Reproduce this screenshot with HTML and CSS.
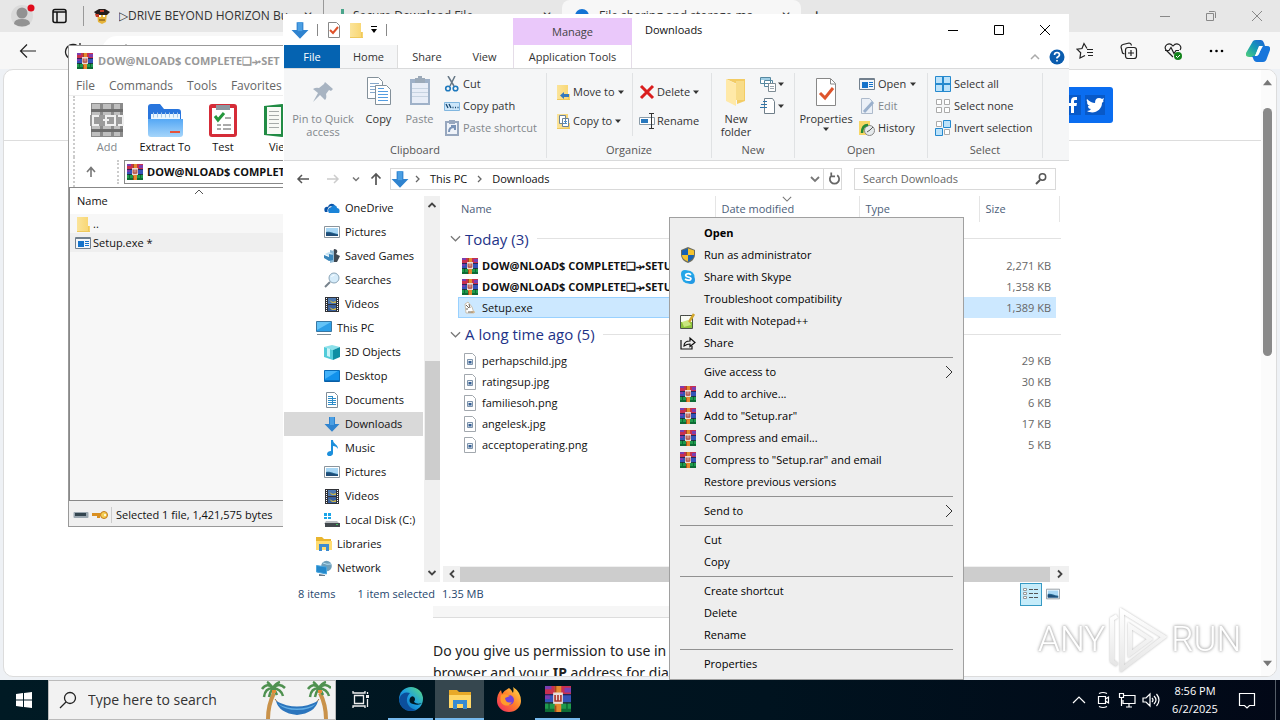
FILE: index.html
```html
<!DOCTYPE html>
<html lang="en">
<head>
<meta charset="utf-8">
<title>Downloads</title>
<link rel="stylesheet" href="styles.css">
</head>
<body>
<svg class="defs" aria-hidden="true">
  <defs>
    <linearGradient id="gEdge" x1="0" y1="1" x2="1" y2="0"><stop offset="0" stop-color="#0c59a4"/><stop offset=".5" stop-color="#1b9de2"/><stop offset="1" stop-color="#5fe07a"/></linearGradient>
    <linearGradient id="gFox" x1="1" y1="0" x2="0" y2="1"><stop offset="0" stop-color="#ffe14a"/><stop offset=".5" stop-color="#ff7a2a"/><stop offset="1" stop-color="#ee2268"/></linearGradient>
    <linearGradient id="gCop" x1="0" y1="1" x2="1" y2="0"><stop offset="0" stop-color="#53d17a"/><stop offset=".5" stop-color="#159ab5"/><stop offset="1" stop-color="#1d5fd8"/></linearGradient>
    <linearGradient id="gFolder" x1="0" y1="0" x2="1" y2="0"><stop offset="0" stop-color="#fbe49a"/><stop offset="1" stop-color="#f8d56f"/></linearGradient>
    <linearGradient id="gExt" x1="0" y1="0" x2="0" y2="1"><stop offset="0" stop-color="#55a8f5"/><stop offset="1" stop-color="#a5d5fa"/></linearGradient>
    <linearGradient id="gMark" x1="0" y1="0" x2="0" y2="1"><stop offset="0" stop-color="#fff"/><stop offset="1" stop-color="#e6e6e6"/></linearGradient>
  </defs>
  <symbol id="rar" viewBox="0 0 16 16"><path fill="#c8304f" d="M0 0h16v5H0z"/><path fill="#7b3fb0" d="M0 0h4v2H0zM12 1h4v3h-4z"/><path fill="#3453b8" d="M0 5h16v5H0z"/><path fill="#7a3bb0" d="M0 5h3v3H0z"/><path fill="#1f9a4c" d="M0 10h16v6H0z"/><path fill="#0d6b35" d="M0 14h16v2H0zM2 10h1v6H2zM13 10h1v6h-1z"/><path fill="#231b3c" d="M0 5h16v.7H0zM0 10h16v.7H0z"/><path fill="#e58a2e" d="M6 0h4v16H6z"/><path fill="#a64a1c" d="M6 0h1v4H6zM6 12h1v4H6z"/><path fill="#e9dcd8" d="M5 4h6v7H5z"/><path fill="none" stroke="#a9322b" d="M6.200 5.500v3.700h3.600V5.500M8 5.500v3.500"/></symbol>
  <symbol id="down" viewBox="0 0 16 16"><path fill="#2f83cf" d="M5 1h6v7h4.500L8 15.800.5 8H5z"/><path fill="#4b9fe3" d="M6 1h4v8H6z"/></symbol>
  <symbol id="sheet" viewBox="0 0 16 16"><path fill="#fff" stroke="#a2a8ae" d="M2.500.5h8l3 3v12h-11z"/><path fill="#e8eef4" stroke="#7c93ab" d="M5.500 6.500h5v5h-5z"/><path fill="#345f95" d="M6.500 8h3v2.500h-3z"/></symbol>
  <symbol id="folder" viewBox="0 0 16 16"><path fill="url(#gFolder)" d="M2 1h11v9h2v5H2z"/><path fill="#efc95d" d="M2 15h13v1H2zM13 10h1v5h-1z"/></symbol>
  <symbol id="pics" viewBox="0 0 16 16"><path fill="#fff" stroke="#8a949c" d="M.5 2.500h15v11H.5z"/><path fill="#a9d7f5" d="M2 4h12v8H2z"/><path fill="#2a6c96" d="M2 8c4-1 6 1 12 2v2H2z"/><path fill="#1f4d78" d="M2 9c4-1 7 1 12 2v1H2z"/></symbol>
  <symbol id="video" viewBox="0 0 16 16"><path fill="#303237" d="M1 1h14v15H1z"/><path fill="#4d78b0" d="M4 2h8v6H4z"/><path fill="#385f9c" d="M4 9h8v6H4z"/><path fill="#c9b44b" d="M5 4l3 3h4V5L9 6zM5 11l3 3h4v-2l-3 1z"/><path stroke="#fff" stroke-dasharray="1 1" d="M2.500 2v14M13.500 2v14"/></symbol>
  <symbol id="cloud" viewBox="0 0 16 16"><path fill="#0a54a8" d="M1 12C-1 8 2 6 4 7c1-4 6-4 7-1L6 12z"/><path fill="#1b84d8" d="M5 13c-2-3 0-5 2-5 1-4 6-3 6 0 3 0 3 4 2 5z"/><path fill="#fff" d="M4.600 12C3 9 6 7 7 7.600l.8-1.500C5 6 3 9 3.600 12z"/></symbol>
  <symbol id="games" viewBox="0 0 16 16"><path fill="#3f4750" d="M10 1c4 0 4 3 2 5l4 2-3 6H9V5z"/><path fill="#8fb9d4" d="M6 2l4 1v11l-4 1z"/><path fill="#c4e2f3" d="M1 6l4-2 4 2-4 2z"/><path fill="#3a86bb" d="M0 7l5 2V6l4 1v5l-4 1-5-3z"/></symbol>
  <symbol id="lens" viewBox="0 0 16 16"><path stroke="#77828c" stroke-width="2" d="M1 15l5-5"/><circle cx="10" cy="6" r="5" fill="#d6ecfa" stroke="#8aa5b8"/><path fill="none" stroke="#fff" d="M7.500 5q1-2 3-2"/></symbol>
  <symbol id="pc" viewBox="0 0 16 16"><path fill="#2c9fe8" stroke="#3877a3" d="M.5 1.500h15v10H.5z"/><path fill="#63c3f7" d="M1 2h14L1 10z"/><path fill="#7d8d98" d="M1 14h14v1H1z"/></symbol>
  <symbol id="cube" viewBox="0 0 16 16"><path fill="#8ce0ea" d="M0 3l8-2 8 2-7 3z"/><path fill="#52cbd9" d="M0 3l9 3v10l-9-3z"/><path fill="#0e8ea3" d="M16 3L9 6v10l7-3z"/><path fill="#c9f3f7" d="M3 4l3 1v8l-3-1z"/></symbol>
  <symbol id="desk" viewBox="0 0 16 16"><path fill="#1191ec" stroke="#0a6cb8" d="M.5 2.500h15v11H.5z"/><path fill="#43b2fa" d="M1 3h13L1 11z"/><path stroke="#064f8f" d="M1 13h14"/></symbol>
  <symbol id="docs" viewBox="0 0 16 16"><path fill="#fff" stroke="#7f8d98" d="M2.500.5h8l3 3v12h-11z"/><path stroke="#2c8cc9" d="M4 4.500h5M4 6.500h8M4 8.500h8M4 10.500h8M4 12.500h8M8.500 5v8"/></symbol>
  <symbol id="music" viewBox="0 0 16 16"><path fill="#1c8fdc" d="M7 0h2c0 4 5 4 5 9-1-2-3-3-5-3v7c0 4-6 4-6 1 0-2 2-3 4-3z"/></symbol>
  <symbol id="disk" viewBox="0 0 16 16"><path fill="#1aa5e8" d="M0 1h3v3H0zM4 1h3v3H4zM0 5h3v2H0zM4 5h3v2H4z"/><path fill="#b9bdc1" d="M2 9h11l3 3H0z"/><path fill="#42484d" d="M1 11h15v4H1z"/><path fill="#40c05a" d="M12 12h2v1h-2z"/></symbol>
  <symbol id="libs" viewBox="0 0 16 16"><path fill="#e9b52f" d="M0 1h6l2 2h7v11H0z"/><path fill="#ffdc71" d="M0 5h16v9H0z"/><path fill="#3c8bd0" d="M3 8h10v7h-3v-4H6v4H3z"/></symbol>
  <symbol id="net" viewBox="0 0 16 16"><circle cx="10.500" cy="6" r="5.300" fill="#6f9fba"/><path fill="none" stroke="#b4def3" d="M7 3q4 2 8 1"/><path fill="#2488cb" stroke="#4aa6de" d="M.5 5.500l10 1.500v7l-10-2z"/><path fill="#65798a" d="M3 14l6 1v1H3z"/></symbol>
  <symbol id="cat" viewBox="0 0 16 16"><path fill="#fff" stroke="#c9bfae" d="M3 4l3-2 4 5 2 6H4z"/><path stroke="#6d665d" d="M4 5l3 3M7 4l1 4M4 9h2M6 12h5"/><path fill="#d69a4e" d="M9 11h4v2H9z" opacity=".35"/></symbol>
  <symbol id="caret" viewBox="0 0 8 8"><path fill="currentColor" d="M1 2.500h6L4 6z"/></symbol>
  <symbol id="exe" viewBox="0 0 16 16"><path fill="#f4f7fa" stroke="#72808e" d="M.5 2.500h15v11H.5z"/><path fill="#72808e" d="M1 3h14v1H1z"/><path fill="#1673ca" d="M3 6h6v6H3z"/><path stroke="#1673ca" d="M10 6.500h4M10 8.500h4M10 10.500h4"/></symbol>
  <symbol id="chev" viewBox="0 0 12 12"><path fill="none" stroke="currentColor" stroke-width="1.300" d="M1 3.500l5 5 5-5"/></symbol>
</svg>

<div class="desktop">
  <section class="browser" aria-label="Browser">
    <div class="tabstrip">
      <svg class="avatar" viewBox="0 0 24 24"><circle cx="11" cy="12" r="11" fill="#dadada"/><circle cx="11" cy="9" r="5.500" fill="#929292"/><path fill="#929292" d="M3 20q0-5 8-5t8 5q-8 5-16 0z"/><circle cx="20" cy="4" r="3.500" fill="#e00b1c"/></svg>
      <svg class="spaces" viewBox="0 0 16 16"><rect x="1" y="1.500" width="13" height="13" rx="2" fill="none" stroke="#111" stroke-width="1.500"/><path stroke="#111" stroke-width="1.500" d="M1 4h13M5 4v10"/></svg>
      <i class="tabsep"></i>
      <div class="tab"><svg class="i16" viewBox="0 0 16 16"><path fill="#e6b43a" d="M3 5h10l-1 9-4 2-4-2z"/><path fill="#251d1c" d="M0 4l5-3h6l5 3-3 3H3z"/><path fill="#c43b25" d="M1 6h4v3H2zM6 2h4v2H6z"/><path fill="#fff" d="M5 7h2v2H5zM9 7h2v2H9z"/><path stroke="#684315" d="M5 12h6"/></svg><span>▷DRIVE BEYOND HORIZON Bu</span><b>✕</b></div>
      <div class="tab second"><i class="green"></i><span>Secure Download File</span><b>✕</b></div>
      <div class="tab active"><svg class="i16" viewBox="0 0 16 16"><circle cx="8" cy="8" r="7" fill="#1473d4"/></svg><span>File sharing and storage ma</span><b>✕</b></div>
      <button class="plus" aria-label="New tab">+</button>
      <div class="caption">
        <svg viewBox="0 0 12 12"><path stroke="#888" d="M1 6.500h10"/></svg>
        <svg viewBox="0 0 12 12"><path fill="none" stroke="#888" d="M1.500 3.500h7v7h-7zM4 1.500h5.500q1 0 1 1V8"/></svg>
        <svg viewBox="0 0 12 12"><path stroke="#888" d="M1 1l10 10M11 1L1 11"/></svg>
      </div>
    </div>
    <div class="bar">
      <svg class="back" viewBox="0 0 18 16"><path fill="none" stroke="#222" stroke-width="1.200" d="M17 8H1.500M8 1.500L1.500 8 8 14.500"/></svg>
      <svg class="reload" viewBox="0 0 18 18"><path fill="none" stroke="#222" stroke-width="1.300" d="M15.500 6A7.500 7.500 0 1 0 16.500 9M16 1v5h-5"/></svg>
      <div class="urlbox"><svg class="i16" viewBox="0 0 16 16"><path fill="none" stroke="#555" d="M5 7V5a3 3 0 0 1 6 0v2M4 7h8v6H4z"/></svg></div>
      <div class="baricons">
        <svg viewBox="0 0 18 18"><path fill="none" stroke="#222" stroke-width="1.200" d="M11 6.500L8 1.500 6 6.500l-5 .7 3.700 3.500L4 16l5-2.500M11 7.500h6M11 10.500h6M12 13.500h5"/></svg>
        <svg viewBox="0 0 18 18"><path fill="none" stroke="#222" stroke-width="1.200" d="M4.500 12L2.500 11 1 5q0-2 2-2.500L9 1q2 0 2.500 2.500"/><rect x="5.500" y="5.500" width="11" height="11" rx="2.500" fill="none" stroke="#222" stroke-width="1.200"/><path stroke="#222" stroke-width="1.200" d="M11 8v6M8 11h6"/></svg>
        <svg viewBox="0 0 18 18"><path fill="none" stroke="#222" stroke-width="1.200" d="M9 15L2 8C-1 4 5-1 9 4c4-5 10 0 7 4M1 8.500h4l2-3 3 6 2-3h3"/><circle cx="14" cy="14" r="4" fill="#14831c"/><path stroke="#fff" fill="none" d="M12 14l1.500 1.500L16 13"/></svg>
        <svg viewBox="0 0 18 18"><circle cx="3" cy="9" r="1.300"/><circle cx="8.500" cy="9" r="1.300"/><circle cx="14" cy="9" r="1.300"/></svg>
      </div>
      <svg class="copilot" viewBox="0 0 24 24"><path fill="url(#gCop)" d="M7 2q1-1 3-1h5q2 0 3 3l1 3h-4q-2 0-3 3l-2 5q-1 3-3 3H3q-4 0-3-4z"/><path fill="#1876db" d="M17 7h4q4 0 3 4l-3 8q-1 4-4 4h-6q-3 0-4-4l-1-2h4q2 0 3-3z"/><path fill="#fff" d="M13 7h3l-3 8q-1 2-3 2H9z"/></svg>
    </div>
    <div class="page">
      <header class="sitehead"><div class="social"><svg viewBox="0 0 18 18"><path fill="#fff" d="M9 17v-7H6V7h3V5q0-4 4-4h2v3h-2q-1 0-1 1v2h3l-.5 3H12v7z"/></svg><svg viewBox="0 0 18 18"><path fill="#fff" d="M1 3q4 4 8 4 0-5 4-5 2 0 3 1l2-1-1 3 1-.3L16 7C16 14 8 19 1 15q3 0 4-2-3 0-3-3h2Q1 9 1 6l1 .6Q0 5 1 3z"/></svg></div></header>
      <div class="consent"><div class="strip"></div><p>Do you give us permission to use in<br>browser and your <b>IP</b> address for dia</p></div>
      <div class="pscroll"><svg viewBox="0 0 10 10"><path fill="#777" d="M0 8l5-6 5 6z"/></svg><i></i><svg viewBox="0 0 10 10"><path fill="#777" d="M0 2l5 6 5-6z"/></svg></div>
    </div>
  </section>

  <section class="win rarwin" aria-label="WinRAR">
    <div class="rtitle"><svg class="i16"><use href="#rar"/></svg><b>DOW@NLOAD$ COMPLETE❏⤞SET</b></div>
    <nav class="rmenu"><button>File</button><button>Commands</button><button>Tools</button><button>Favorites</button></nav>
    <div class="rtools">
      <button class="off"><svg viewBox="0 0 36 36"><path fill="#777" d="M2 1h32v34H2z"/><path fill="#b5b5b5" d="M3 2h8v32H3zM14 2h8v32h-8zM25 2h6v32h-6z"/><path fill="#555" d="M2 7h32v3H2zM2 27h32v3H2z"/><path fill="#8a8a8a" d="M1 13h34v11H1z"/><path fill="none" stroke="#eee" stroke-width="2" d="M10 14H4v9h6M17 14h9v9h-9zM14 18h6M29 14h5v9h-5"/></svg>Add</button>
      <button><svg viewBox="0 0 36 36"><path fill="#2875dd" d="M1 5q0-3 3-3h9l4 5h14q3 0 3 3v18H1z"/><path fill="#eaf6ff" d="M4 12h29v12H4z"/><path stroke="#a7c8e7" stroke-dasharray="1 3" stroke-width="5" d="M6 13h26"/><path fill="url(#gExt)" d="M1 17h35v15q0 3-3 3H4q-3 0-3-3z"/><path fill="#e6533a" d="M23 29h10v2H23z"/></svg>Extract To</button>
      <button><svg viewBox="0 0 36 36"><rect x="4" y="2" width="28" height="33" rx="3" fill="#d52c38"/><path fill="#fff" d="M7 6h22v26H7z"/><path fill="#8c979f" d="M11 3h14v5H11z"/><path fill="none" stroke="#24973c" stroke-width="3" d="M10 14l3 4 6-7"/><path stroke="#555" d="M20 16h6M12 23h4M18 23h8M12 27h4M18 27h8"/></svg>Test</button>
      <button><svg viewBox="0 0 36 36"><path fill="#218b44" d="M1 4l18-2 16 3v28l-16 2-18-2z"/><path fill="#f8f9f5" d="M4 5h14v27H4zM20 5h13v27H20z"/><path stroke="#a6aaa8" d="M6 9.500h10M6 13.500h10M6 17.500h10M6 21.500h10M6 25.500h10M22 9.500h9M22 13.500h9"/></svg>View</button>
    </div>
    <div class="raddr"><div class="rup"><svg viewBox="0 0 12 12"><path fill="none" stroke="#777" stroke-width="1.600" d="M6 11V2M2 6l4-4.500L10 6"/></svg></div><div class="rpath"><svg class="i16"><use href="#rar"/></svg><b>DOW@NLOAD$ COMPLET</b></div></div>
    <div class="rlist">
      <div class="rhead">Name<svg class="sort" viewBox="0 0 12 12"><path fill="none" stroke="#555" d="M2 8l4-4 4 4"/></svg></div>
      <div class="rrow"><svg class="i16"><use href="#folder"/></svg>..</div>
      <div class="rrow alt"><svg class="i16"><use href="#exe"/></svg>Setup.exe *</div>
    </div>
    <div class="rstatus"><svg viewBox="0 0 16 16"><rect x=".5" y="5" width="15" height="6" rx="1" fill="#9ba7b0"/><path fill="#34454f" d="M2 6h11v3H2z"/></svg><svg viewBox="0 0 16 16"><circle cx="12" cy="8" r="3.500" fill="#f5cd53" stroke="#c1781d"/><path fill="#d98f21" d="M0 6h9v3H8v2H5V9H0z"/><circle cx="13" cy="8" r="1" fill="#fff"/></svg><span>Selected 1 file, 1,421,575 bytes</span></div>
  </section>

  <section class="win explorer" aria-label="Downloads">
    <div class="etop">
      <div class="quick"><svg class="i18"><use href="#down"/></svg><i></i><svg class="i16" viewBox="0 0 16 16"><path fill="#fff" stroke="#888" d="M2.500.5h8l3 3v12h-11z"/><path fill="none" stroke="#df5129" stroke-width="2" d="M4 8l3 3 5-6"/></svg><svg class="i16"><use href="#folder"/></svg><svg class="qcaret" viewBox="0 0 8 8"><path d="M1 0h6v1H1zM1 3h6L4 7z"/></svg><i></i></div>
      <div class="manage">Manage</div><h1>Downloads</h1>
      <div class="ecap"><button aria-label="Minimize"><svg viewBox="0 0 12 12"><path stroke="#000" d="M1 6.500h10"/></svg></button><button aria-label="Maximize"><svg viewBox="0 0 12 12"><path fill="none" stroke="#000" d="M1.500 1.500h9v9h-9z"/></svg></button><button aria-label="Close"><svg viewBox="0 0 12 12"><path stroke="#000" d="M1 1l10 10M11 1L1 11"/></svg></button></div>
    </div>
    <nav class="etabs"><button class="file">File</button><button class="home">Home</button><button class="t">Share</button><button class="t v">View</button><button class="apptools">Application Tools</button><span class="help"><svg class="up" viewBox="0 0 10 10"><path fill="none" stroke="#aaa" stroke-width="1.500" d="M1 7l4-4 4 4"/></svg><svg class="i16" viewBox="0 0 16 16"><circle cx="8" cy="8" r="7.500" fill="#0a5cae"/><path fill="none" stroke="#fff" stroke-width="1.600" d="M5.500 6q0-2.500 2.500-2.500T10.500 6Q10 7.500 8 8.500v1M8 11v1.600"/></svg></span></nav>
    <div class="ribbon">
      <div class="grp clip"><div class="cols">
        <button class="big off pin"><svg viewBox="0 0 32 32"><path fill="#9ba9b9" d="M18 6l8 7-2 2-2-1-3 4q1 4-1 6l-5-5-7 7 5-9-5-4q3-2 6-1l5-4z"/></svg>Pin to Quick<br>access</button>
        <button class="big"><svg viewBox="0 0 32 32"><path fill="#fff" stroke="#83909a" d="M4.500 1.500h11l4 4v17h-15z"/><path stroke="#86a8cb" d="M7 7.500h9M7 10.500h9M7 13.500h9M7 16.500h9"/><path fill="#fff" stroke="#83909a" d="M12.500 9.500h11l4 4v15h-15z"/><path stroke="#559de0" d="M15 15.500h10M15 18.500h10M15 21.500h10M15 24.500h10M15 12.500h6"/></svg>Copy</button>
        <button class="big off"><svg viewBox="0 0 32 32"><path fill="#91a5c0" d="M6 3h20v26H6z"/><path fill="#e6ecf7" d="M8 7h16v20H8z"/><path fill="#8d9daf" d="M11 2h3V0h4v2h3v5H11z"/><path stroke="#c0cede" d="M8 12.500h16M8 16.500h16M8 20.500h16"/></svg>Paste</button>
        <div class="small"><button><svg viewBox="0 0 16 16"><path stroke="#667786" stroke-width="1.500" d="M4 0l6 10M11 0L6 10"/><circle cx="4" cy="12.500" r="2.300" fill="none" stroke="#1e79bd" stroke-width="1.600"/><circle cx="11.500" cy="12.500" r="2.300" fill="none" stroke="#1e79bd" stroke-width="1.600"/></svg>Cut</button><button><svg viewBox="0 0 16 16"><path fill="#cce6fa" stroke="#80b6df" d="M.5 4.500h15v8H.5z"/><path fill="none" stroke="#15456d" stroke-width="1.300" d="M2 6l2 4M5 6l2 4M8.500 9.500h1M11 9.500h1M13.500 9.500h1"/></svg>Copy path</button><button class="off"><svg viewBox="0 0 16 16"><path fill="#eff3fa" stroke="#879ab5" stroke-width="2" d="M2 2h12v13H2z"/><path fill="#879ab5" d="M5 0h6v4H5z"/><path fill="none" stroke="#6482ac" stroke-width="2" d="M5 12q0-5 5-5M7 6h4v4"/></svg>Paste shortcut</button></div>
      </div><h2>Clipboard</h2></div>
      <div class="grp org"><div class="cols">
        <div class="small wide"><button><svg viewBox="0 0 16 16"><use href="#folder"/><path fill="#3478bd" d="M5 11.500l4-3.500v2h5v3H9v2z"/></svg>Move to <svg class="car"><use href="#caret"/></svg></button><button><svg viewBox="0 0 16 16"><use href="#folder"/><path fill="#fff" stroke="#6c8398" d="M4.500 2.500h6v8h-6zM7.500 5.500h6v8h-6z"/><path stroke="#4c91ce" d="M9 8.500h3M9 10.500h3"/></svg>Copy to <svg class="car"><use href="#caret"/></svg></button></div>
        <div class="small wide line"><button><svg viewBox="0 0 16 16"><path stroke="#da1e1e" stroke-width="3" d="M2 2l12 12M14 2L2 14"/></svg>Delete <svg class="car"><use href="#caret"/></svg></button><button><svg viewBox="0 0 16 16"><path fill="#fff" stroke="#8a9ba8" d="M.5 4.500h15v7H.5z"/><path fill="#2878be" d="M2 6h7v4H2z"/><path fill="none" stroke="#333" d="M10 .5h5M12.500 1v14M10 15.500h5"/></svg>Rename</button></div>
      </div><h2>Organize</h2></div>
      <div class="grp new"><div class="cols">
        <button class="big"><svg viewBox="0 0 32 32"><path fill="#f3cc64" d="M6 3h19v22l-8 3V8z"/><path fill="#ffe9a8" d="M6 3l10 5v22L6 25z"/><path fill="#f8dc89" d="M16 5h8v19h-8z"/></svg>New<br>folder</button>
        <div class="small tiny"><button aria-label="New item"><svg viewBox="0 0 16 16"><path fill="#fff" stroke="#5688a0" d="M.5 1.500h10v6H.5zM4.500 4.500h8v6h-8z"/><path fill="#9fcee5" d="M1 2h9v2H1z"/><path fill="#fff" stroke="#7d8b94" d="M8.500 7.500h7v8h-7z"/><path stroke="#9aa7b0" d="M10 10.500h4M10 12.500h4"/></svg><svg class="car"><use href="#caret"/></svg></button><button aria-label="Easy access"><svg viewBox="0 0 16 16"><path fill="#fff" stroke="#6f7e89" d="M4.500.5h8l2 3v12h-10z"/><path stroke="#2f75a9" d="M0 9.500h7M1 6.500h6M3 3.500h4"/></svg><svg class="car"><use href="#caret"/></svg></button></div>
      </div><h2>New</h2></div>
      <div class="grp opn"><div class="cols">
        <button class="big"><svg viewBox="0 0 32 32"><path fill="#fff" stroke="#888" d="M6.500 2.500h14l5 5v22h-19z"/><path fill="none" stroke="#888" d="M20.500 3v5h5"/><path fill="none" stroke="#de542c" stroke-width="3" d="M10 17l5 5 8-10"/></svg>Properties<svg class="car"><use href="#caret"/></svg></button>
        <div class="small"><button><svg><use href="#exe"/></svg>Open <svg class="car"><use href="#caret"/></svg></button><button class="off"><svg viewBox="0 0 16 16"><path fill="#eaf0f8" stroke="#a1b0c4" d="M2.500.5h8l3 3v12h-11z"/><path stroke="#8ba4c5" stroke-width="3" d="M5 14l9-10"/></svg>Edit</button><button><svg viewBox="0 0 16 16"><path fill="#f7d766" d="M0 1h11v14H0z"/><circle cx="10.500" cy="10.500" r="5" fill="#e6eaec" stroke="#888"/><path fill="none" stroke="#278b39" stroke-width="2.500" d="M3 13q0-8 6-8"/><path fill="none" stroke="#555" d="M8 12l3-2 3-3"/></svg>History</button></div>
      </div><h2>Open</h2></div>
      <div class="grp sel"><div class="cols">
        <div class="small"><button><svg viewBox="0 0 16 16"><path fill="#bce2fa" stroke="#2589ce" d="M.5.5h15v15H.5z"/><path fill="none" stroke="#2589ce" stroke-width="2" d="M8 0v16M0 8h16"/></svg>Select all</button><button><svg viewBox="0 0 16 16"><path fill="#fff" stroke="#aaa" d="M1.500 1.500h5v5h-5zM9.500 1.500h5v5h-5zM1.500 9.500h5v5h-5zM9.500 9.500h5v5h-5z"/></svg>Select none</button><button><svg viewBox="0 0 16 16"><path fill="#fff" stroke="#aaa" d="M1.500 1.500h5v5h-5zM9.500 9.500h5v5h-5z"/><path fill="#bce2fa" stroke="#2589ce" d="M8.500.5h7v7h-7zM.5 8.500h7v7h-7z"/></svg>Invert selection</button></div>
      </div><h2>Select</h2></div>
    </div>
    <div class="addr">
      <svg class="i16" viewBox="0 0 16 16"><path fill="none" stroke="#555" stroke-width="1.500" d="M14 8H3M7 4L3 8l4 4"/></svg>
      <svg class="i16 fwd" viewBox="0 0 16 16"><path fill="none" stroke="#ccc" stroke-width="1.500" d="M2 8h11M9 4l4 4-4 4"/></svg>
      <svg class="cv" viewBox="0 0 8 8"><path fill="none" stroke="#777" stroke-width="1.500" d="M1 2.500l3 3 3-3"/></svg>
      <svg class="i16" viewBox="0 0 16 16"><path fill="none" stroke="#555" stroke-width="1.700" d="M8 14V3M3.500 7.500L8 3l4.500 4.500"/></svg>
      <div class="crumbs"><svg class="i18"><use href="#down"/></svg><svg class="gt" viewBox="0 0 8 8"><path fill="none" stroke="#666" stroke-width="1.300" d="M2 1l3 3-3 3"/></svg><span>This PC</span><svg class="gt" viewBox="0 0 8 8"><path fill="none" stroke="#666" stroke-width="1.300" d="M2 1l3 3-3 3"/></svg><span>Downloads</span><svg class="dd" viewBox="0 0 10 10"><path fill="none" stroke="#777" stroke-width="1.800" d="M1 3l4 4 4-4"/></svg><svg class="re" viewBox="0 0 12 12"><path fill="none" stroke="#666" stroke-width="1.600" d="M8.500 2.500A4.300 4.300 0 1 1 3.500 2.500M3 0v3.500h3.500"/></svg></div>
      <label class="search"><input type="text" placeholder="Search Downloads" aria-label="Search Downloads"><svg viewBox="0 0 12 12"><circle cx="7.500" cy="4" r="3.200" fill="none" stroke="#555" stroke-width="1.500"/><path stroke="#555" stroke-width="2" d="M5 7L1 11"/></svg></label>
    </div>
    <div class="ebody">
      <ul class="tree">
        <li><svg><use href="#cloud"/></svg>OneDrive</li><li><svg><use href="#pics"/></svg>Pictures</li><li><svg><use href="#games"/></svg>Saved Games</li><li><svg><use href="#lens"/></svg>Searches</li><li><svg><use href="#video"/></svg>Videos</li><li class="root"><svg><use href="#pc"/></svg>This PC</li><li><svg><use href="#cube"/></svg>3D Objects</li><li><svg><use href="#desk"/></svg>Desktop</li><li><svg><use href="#docs"/></svg>Documents</li><li class="cur"><svg><use href="#down"/></svg>Downloads</li><li><svg><use href="#music"/></svg>Music</li><li><svg><use href="#pics"/></svg>Pictures</li><li><svg><use href="#video"/></svg>Videos</li><li><svg><use href="#disk"/></svg>Local Disk (C:)</li><li class="root"><svg><use href="#libs"/></svg>Libraries</li><li class="root"><svg><use href="#net"/></svg>Network</li>
      </ul>
      <div class="vs"><svg viewBox="0 0 10 10"><path fill="none" stroke="#444" stroke-width="1.800" d="M1.500 7L5 3.500 8.500 7"/></svg><i></i><svg viewBox="0 0 10 10"><path fill="none" stroke="#444" stroke-width="1.800" d="M1.500 3L5 6.500 8.500 3"/></svg></div>
      <div class="files">
        <table>
          <colgroup><col class="c1"><col class="c2"><col class="c3"><col class="c4"><col></colgroup>
          <thead><tr><th>Name</th><th><svg class="dsort"><use href="#chev"/></svg>Date modified</th><th>Type</th><th>Size</th><th></th></tr></thead>
          <tbody>
            <tr class="g"><td colspan="5"><div><svg><use href="#chev"/></svg><span>Today (3)</span><i></i></div></td></tr>
            <tr><td><div class="f"><svg><use href="#rar"/></svg><b>DOW@NLOAD$ COMPLETE❏⤞SETU</b></div></td><td></td><td></td><td class="n">2,271 KB</td><td></td></tr>
            <tr><td><div class="f"><svg><use href="#rar"/></svg><b>DOW@NLOAD$ COMPLETE❏⤞SETU</b></div></td><td></td><td></td><td class="n">1,358 KB</td><td></td></tr>
            <tr class="s"><td><div class="f"><svg><use href="#cat"/></svg>Setup.exe</div></td><td></td><td></td><td class="n">1,389 KB</td><td></td></tr>
            <tr class="g h"><td colspan="5"><div><svg><use href="#chev"/></svg><span>A long time ago (5)</span><i></i></div></td></tr>
            <tr><td><div class="f"><svg><use href="#sheet"/></svg>perhapschild.jpg</div></td><td></td><td></td><td class="n">29 KB</td><td></td></tr>
            <tr><td><div class="f"><svg><use href="#sheet"/></svg>ratingsup.jpg</div></td><td></td><td></td><td class="n">30 KB</td><td></td></tr>
            <tr><td><div class="f"><svg><use href="#sheet"/></svg>familiesoh.png</div></td><td></td><td></td><td class="n">6 KB</td><td></td></tr>
            <tr><td><div class="f"><svg><use href="#sheet"/></svg>angelesk.jpg</div></td><td></td><td></td><td class="n">17 KB</td><td></td></tr>
            <tr><td><div class="f"><svg><use href="#sheet"/></svg>acceptoperating.png</div></td><td></td><td></td><td class="n">5 KB</td><td></td></tr>
          </tbody>
        </table>
        <div class="hs"><svg viewBox="0 0 10 10"><path fill="none" stroke="#444" stroke-width="1.800" d="M7 1.500L3.500 5 7 8.500"/></svg><i></i><svg viewBox="0 0 10 10"><path fill="none" stroke="#444" stroke-width="1.800" d="M3 1.500L6.500 5 3 8.500"/></svg></div>
      </div>
    </div>
    <footer class="estat"><span>8 items</span><span>1 item selected</span><span>1.35 MB</span><div class="views"><button class="on" aria-label="Details"><svg viewBox="0 0 18 16"><path fill="#fff" stroke="#999" d="M1.500 2.500h3v2h-3zM1.500 6.500h3v2h-3zM1.500 10.500h3v2h-3z"/><path stroke="#555" d="M7 3.500h4M12 3.500h4M7 7.500h4M12 7.500h4M7 11.500h4M12 11.500h4"/></svg></button><button aria-label="Large icons"><svg viewBox="0 0 16 16"><use href="#pics"/></svg></button></div></footer>
  </section>

  <div class="mark" aria-hidden="true"><span>ANY</span><svg viewBox="0 0 60 64"><path fill="none" stroke="url(#gMark)" stroke-width="4" d="M14 3v58L56 29zM14 3l42 26M22 18v28l20-15z"/><path fill="none" stroke="url(#gMark)" stroke-width="4" d="M9 8L4 11v42l5 4"/></svg><span>RUN</span></div>

  <menu class="ctx">
    <li><button class="bold"><i></i>Open</button></li>
    <li><button><svg viewBox="0 0 16 16"><path fill="#6d6d5f" d="M8 0l7 3v5q0 5-7 8Q1 13 1 8V3z"/><path fill="#1661b5" d="M8 1.500V8H2V3.500zM8 8h6q0 4-6 6.500z"/><path fill="#f4c22d" d="M8 1.500l6 2V8H8zM2 8h6v6.500Q2 12 2 8z"/></svg>Run as administrator</button></li>
    <li><button><svg viewBox="0 0 16 16"><circle cx="8" cy="8" r="6.500" fill="#23a6e8"/><circle cx="5" cy="5" r="4" fill="#23a6e8"/><circle cx="11" cy="11" r="4" fill="#2299e4"/><path fill="none" stroke="#fff" stroke-width="1.700" d="M11 5.800Q9 4 6.500 5c-2 1.500 0 2.600 1.500 3s4 1 2.500 2.700Q8 12 5 10"/></svg>Share with Skype</button></li>
    <li><button><i></i>Troubleshoot compatibility</button></li>
    <li><button><svg viewBox="0 0 16 16"><path fill="#f9fbf4" stroke="#4d544a" d="M.5 2.500h12v13H.5z"/><path fill="#8ec33c" d="M1 9h11v6H1z"/><path fill="#c9e67d" d="M2 9l6-2 3 5-7 2z"/><path stroke="#444" stroke-dasharray="1 1" d="M1 2.500h11"/><path stroke="#d1a52b" stroke-width="2.500" d="M9 9l5-8"/></svg>Edit with Notepad++</button></li>
    <li><button><svg viewBox="0 0 16 16"><path fill="none" stroke="#111" stroke-width="1.200" d="M1 5v9h11v-3M4 11q0-5 6-5V3l5 4.500-5 4V9Q7 9 4 11z"/></svg>Share</button></li>
    <li class="sep"></li>
    <li><button><i></i>Give access to<svg class="sub" viewBox="0 0 8 12"><path fill="none" stroke="#333" d="M1 0l6 6-6 6"/></svg></button></li>
    <li><button><svg><use href="#rar"/></svg>Add to archive...</button></li>
    <li><button><svg><use href="#rar"/></svg>Add to "Setup.rar"</button></li>
    <li><button><svg><use href="#rar"/></svg>Compress and email...</button></li>
    <li><button><svg><use href="#rar"/></svg>Compress to "Setup.rar" and email</button></li>
    <li><button><i></i>Restore previous versions</button></li>
    <li class="sep"></li>
    <li><button><i></i>Send to<svg class="sub" viewBox="0 0 8 12"><path fill="none" stroke="#333" d="M1 0l6 6-6 6"/></svg></button></li>
    <li class="sep"></li>
    <li><button><i></i>Cut</button></li>
    <li><button><i></i>Copy</button></li>
    <li class="sep"></li>
    <li><button><i></i>Create shortcut</button></li>
    <li><button><i></i>Delete</button></li>
    <li><button><i></i>Rename</button></li>
    <li class="sep"></li>
    <li><button><i></i>Properties</button></li>
  </menu>

  <footer class="taskbar">
    <button class="start" aria-label="Start"><svg viewBox="0 0 16 16"><path fill="#fff" d="M0 2l7-1v6.500H0zM8 1l8-1v7.500H8zM0 8.500h7V15l-7-1zM8 8.500h8V16l-8-1z"/></svg></button>
    <label class="tsearch"><svg class="mag" viewBox="0 0 18 18"><circle cx="11" cy="7" r="5.500" fill="none" stroke="#222" stroke-width="1.300"/><path stroke="#222" stroke-width="1.300" d="M7 11l-6 6"/></svg><input type="text" placeholder="Type here to search" aria-label="Type here to search"><svg class="palms" viewBox="0 0 72 38"><g fill="none" stroke="#c9924a" stroke-width="4"><path d="M9 38q0-14 6-26M67 38q0-14-6-26"/></g><path fill="none" stroke="#987044" d="M16 18l3 4M60 18l-3 4"/><path fill="#2b75bd" d="M17 20q21 11 42 0-3 12-21 14-18-2-21-14z"/><path fill="#62aee6" d="M19 23q19 9 38 0-6 6-19 6-12 0-19-6z"/><g id="fr" fill="none" stroke="#4f9150" stroke-width="2.500"><path d="M14 7Q8 1 3 8M14 7Q6 7 5 16M14 7Q20 1 26 7M14 7q8 1 10 8M14 7q-4-5-6-6M14 7q3-5 7-6M14 7q-3 4-4 9M14 7q3 4 4 7"/></g><use href="#fr" x="46"/><path fill="#e48b35" d="M13 9h4v3h-4zM59 9h4v3h-4z"/></svg></label>
    <button class="task view" aria-label="Task view"><svg class="tv" viewBox="0 0 18 18"><path fill="none" stroke="#eee" stroke-width="1.300" d="M2.500 5.500h9v8h-9zM1 1v2h12V1M1 18v-2h12v2M15.500 2v2M15.500 9v8"/><path fill="#eee" d="M14 5h3v3h-3z"/></svg></button>
    <button class="task run" aria-label="Edge"><svg viewBox="0 0 26 26"><circle cx="13" cy="13" r="12" fill="url(#gEdge)"/><path fill="#0c4f9c" d="M2 11Q5 5 12 7c-6 6-3 15 6 17Q4 28 1 14z"/><path fill="#001822" d="M12 12q-2 5 3 6 6 2 9-1-5 2-8-1 2-3 0-5-2-2-4 1z"/></svg></button>
    <button class="task run cur" aria-label="File Explorer"><svg viewBox="0 0 26 26"><path fill="#e8a928" d="M2 4h8l2 2h12v16H2z"/><path fill="#ffd767" d="M2 9h22v13H2z"/><path fill="#368bd2" d="M6 14h14v9h-4v-5h-6v5H6z"/></svg></button>
    <button class="task" aria-label="Firefox"><svg viewBox="0 0 26 26"><path fill="url(#gFox)" d="M13 2q3 2 4 5 1-4 0-6 8 5 8 14A12 11 0 0 1 1 15Q1 8 5 4l1 4q3-4 7-6z"/><circle cx="13" cy="14" r="5" fill="#7542d9"/><path fill="#ff9b2b" d="M5 9q5-2 9 1l-5 2q1 6 7 4-3 5-8 3T5 9z"/></svg></button>
    <button class="task run" aria-label="WinRAR"><svg><use href="#rar"/></svg></button>
    <div class="tray">
      <svg viewBox="0 0 18 18"><path fill="none" stroke="#fff" stroke-width="1.200" d="M3 12l6-6 6 6"/></svg>
      <svg viewBox="0 0 18 18"><path fill="none" stroke="#fff" stroke-width="1.200" d="M4.500 5.500h7v7h-7zM11.500 8l3-2v6l-3-2M5 2.500q4-2 8 0M5 15.500q4 2 8 0"/></svg>
      <svg viewBox="0 0 18 18"><path fill="none" stroke="#fff" stroke-width="1.200" d="M6 4.500h11v8H5V9M1.500 2.500h4v4h-4zM3.500 6v9M11 13v3M8 16h6"/></svg>
      <svg viewBox="0 0 18 18"><path fill="none" stroke="#fff" stroke-width="1.200" d="M1 7h3l4-4v12l-4-4H1zM10 7q2 2 0 4M12 5q4 4 0 8M14.500 3q5 6 0 12"/></svg>
      <time>8:56 PM<br>6/2/2025</time>
      <svg class="note" viewBox="0 0 18 18"><path fill="none" stroke="#fff" stroke-width="1.200" d="M1.500 2.500h15v12h-5L9 17l-2.500-2.500h-5z"/></svg>
      <i></i>
    </div>
  </footer>
</div>
</body>
</html>
```
FILE: styles.css
```css
* { box-sizing: border-box; }
html, body { margin: 0; height: 100%; }
body { font-family: "Open Sans", "Noto Sans", sans-serif; font-size: 11px; line-height: 16px; color: #111; overflow: hidden; }
button { font: inherit; color: inherit; border: 0; background: none; padding: 0; margin: 0; text-align: left; white-space: nowrap; }
input { font: inherit; border: 0; background: none; outline: 0; padding: 0; min-width: 0; }
svg { flex: none; display: block; }
.defs { position: absolute; width: 0; height: 0; }
.i16 { width: 16px; height: 16px; }
.i18 { width: 18px; height: 18px; }
h1, h2 { margin: 0; font-size: 11px; font-weight: 400; }
.desktop { position: relative; height: 100%; display: flex; flex-direction: column; overflow: hidden; }

/* browser */
.browser { flex: 1; min-height: 0; display: flex; flex-direction: column; background: #eef1f5; }
.tabstrip { height: 32px; flex: none; background: #e7e7e7; display: flex; align-items: center; font-size: 12px; color: #333; white-space: nowrap; }
.avatar { width: 24px; height: 24px; margin-left: 11px; }
.spaces { width: 16px; height: 16px; margin-left: 17px; }
.tabsep { width: 1px; height: 20px; background: #999; margin-left: 15px; }
.tab { width: 239px; height: 32px; display: flex; align-items: center; gap: 9px; padding: 0 10px; }
.tab span { flex: 1; overflow: hidden; }
.tab b { font-weight: 400; }
.second { border-left: 1px solid #999; padding-left: 17px; }
.green { width: 3px; height: 14px; background: #4aa58b; }
.active { background: #f7f7f7; border-radius: 8px 8px 0 0; padding-left: 12px; }
.plus { font-size: 20px; margin-left: 10px; }
.caption { margin-left: auto; display: flex; gap: 34px; padding-right: 17px; }
.caption svg { width: 12px; height: 12px; }
.bar { height: 37px; flex: none; display: flex; align-items: center; background: #f7f7f7; }
.back { width: 18px; height: 16px; margin-left: 19px; }
.reload { width: 18px; height: 18px; margin-left: 27px; }
.urlbox { flex: 1; height: 30px; margin: 0 14px 0 20px; border-radius: 15px; background: #fff; padding: 7px 16px; }
.baricons { display: flex; gap: 26px; margin-right: 20px; }
.baricons svg { width: 18px; height: 18px; }
.copilot { width: 24px; height: 24px; margin-right: 10px; }
.page { position: relative; flex: 1; min-height: 0; margin: 0 3px 3px; background: #fff; border: 1px solid #dcdcdc; border-radius: 10px; overflow: hidden; display: flex; flex-direction: column; }
.sitehead { height: 71px; flex: none; border-bottom: 1px solid #ddd; margin-right: 15px; display: flex; justify-content: flex-end; align-items: center; padding-right: 148px; }
.social { height: 36px; background: #0a6df0; border-radius: 3px; padding: 8px; display: flex; gap: 4px; }
.social svg { width: 20px; height: 20px; background: #0859c8; padding: 1px; }
.consent { width: 440px; margin: auto 0 0 429px; height: 70px; flex: none; font-family: "Noto Sans", "Open Sans", sans-serif; font-size: 14px; line-height: 22px; color: #222; overflow: hidden; }
.consent p { margin: 22px 0 0; white-space: nowrap; }
.strip { height: 12px; background: #f6f6f6; border-bottom: 1px solid #ddd; }
.pscroll { position: absolute; top: 0; right: 0; bottom: 0; width: 15px; background: #fbfbfb; padding: 8px 2px; display: flex; flex-direction: column; }
.pscroll svg { width: 9px; height: 9px; }
.pscroll i { width: 9px; height: 248px; border-radius: 5px; background: #8a8a8a; margin: 21px 0 auto; }

/* shared windows */
.win { position: absolute; display: flex; flex-direction: column; }

/* archive manager */
.rarwin { left: 68px; top: 45px; width: 500px; height: 482px; background: #fff; border: 1px solid #999; }
.rtitle { height: 30px; display: flex; align-items: center; gap: 5px; padding-left: 8px; color: #999; }
.rmenu { height: 20px; display: flex; align-items: center; gap: 14px; padding-left: 7px; color: #666; font-size: 12px; border-bottom: 1px solid #eee; }
.rtools { height: 61px; display: flex; border-left: 2px dotted #ccc; margin-left: 4px; padding-top: 6px; padding-left: 3px; }
.rtools button { width: 58px; display: flex; flex-direction: column; align-items: center; gap: 1px; }
.rtools svg { width: 36px; height: 36px; }
.raddr { height: 30px; display: flex; border-left: 2px dotted #ccc; margin-left: 4px; padding: 3px 0 3px 10px; }
.rup { width: 34px; border-right: 2px dotted #ccc; padding-top: 6px; }
.rup svg { width: 12px; height: 12px; }
.rpath { flex: 1; margin-left: 5px; border: 1px solid #888; display: flex; align-items: center; gap: 4px; padding-left: 2px; }
.rlist { flex: 1; border: 1px solid #888; border-right: 0; background: #f7f7f7; }
.rhead { position: relative; height: 26px; line-height: 26px; background: #fff; padding-left: 7px; }
.sort { position: absolute; left: 123px; top: -2px; width: 12px; height: 12px; }
.rrow { height: 19px; display: flex; align-items: center; gap: 2px; padding-left: 5px; }
.rrow.alt { background: #efefef; }
.rstatus { height: 25px; background: #f0f0f0; display: flex; align-items: center; gap: 3px; padding: 3px 0 0 4px; }
.rstatus svg { width: 16px; height: 16px; }
.rstatus span { border-left: 1px solid #ccc; padding-left: 4px; }

/* file explorer */
.explorer { left: 283px; top: 14px; width: 786px; height: 592px; background: #fff; padding-left: 1px; }
.etop { height: 31px; flex: none; display: flex; align-items: center; }
.quick { width: 229px; display: flex; align-items: center; gap: 6px; padding-left: 7px; }
.quick i { width: 1px; height: 12px; background: #888; margin: 0 2px; }
.qcaret { width: 8px; height: 8px; }
.manage { width: 119px; height: 27px; line-height: 28px; margin-top: 4px; background: #eac8fa; text-align: center; color: #444; }
.etop h1 { margin-left: 13px; }
.ecap { margin-left: auto; display: flex; gap: 34px; padding-right: 18px; }
.ecap svg { width: 12px; height: 12px; }
.etabs { height: 24px; flex: none; display: flex; border-bottom: 1px solid #d9dadb; color: #333; }
.etabs button { text-align: center; }
.etabs .file { width: 56px; background: #0563b1; color: #fff; }
.etabs .home { width: 58px; background: #f5f6f7; border: 1px solid #ddd; border-width: 0 1px 0 0; }
.etabs .t { width: 58px; }
.etabs .v { width: 57px; }
.etabs .apptools { width: 119px; border: 1px solid #e5dde8; border-width: 0 1px; }
.help { margin-left: auto; display: flex; align-items: center; gap: 9px; padding-right: 4px; }
.up { width: 10px; height: 10px; }
.ribbon { height: 92px; flex: none; background: #f5f6f7; border-bottom: 1px solid #d9dadb; display: flex; padding: 4px 0 2px; color: #333; }
.grp { border-right: 1px solid #e0e2e4; display: flex; flex-direction: column; }
.grp h2 { text-align: center; line-height: 16px; color: #555; }
.cols { flex: 1; display: flex; }
.clip { width: 263px; } .org { width: 165px; } .new { width: 83px; } .opn { width: 133px; } .sel { width: 115px; }
.big { width: 41px; display: flex; flex-direction: column; align-items: center; padding-top: 3px; line-height: 13px; text-align: center; }
.big > svg { width: 32px; height: 32px; margin-bottom: 4px; }
.pin { width: 70px; margin-left: 4px; }
.new .big { width: 48px; }
.opn .big { width: 62px; }
.big.off + .small { margin-left: 4px; }
.small { display: flex; flex-direction: column; }
.small button { height: 22px; display: flex; align-items: center; gap: 3px; }
.small svg { width: 16px; height: 16px; }
.small .car, .big .car { width: 8px; height: 8px; margin: 0; }
.wide { width: 85px; padding: 4px 0 0 8px; }
.wide button { height: 29px; gap: 2px; }
.line { width: 79px; padding-left: 6px; border-left: 1px solid #e0e2e4; margin-bottom: 6px; }
.tiny button { gap: 1px; }
.opn .small { padding-left: 2px; }
.sel .small { padding-left: 7px; }
.off { color: #82878c; }
.off svg { opacity: .85; }
.addr { height: 35px; flex: none; display: flex; align-items: center; padding: 0 13px 0 11px; }
.fwd { margin-left: 14px; }
.cv { width: 8px; height: 8px; margin: 0 8px 0 11px; }
.crumbs { flex: 1; height: 22px; border: 1px solid #d9d9d9; margin: 0 12px 0 6px; display: flex; align-items: center; }
.crumbs span { margin-right: 4px; }
.gt { width: 8px; height: 8px; margin: 0 8px 0 5px; }
.dd { width: 10px; height: 10px; margin-left: auto; }
.re { width: 18px; height: 20px; margin-left: 3px; padding-left: 4px; border-left: 1px solid #d9d9d9; }
.search { width: 202px; height: 22px; border: 1px solid #d9d9d9; display: flex; align-items: center; padding: 0 8px; }
.search input { flex: 1; }
.search input::placeholder { color: #666; opacity: 1; }
.search svg { width: 12px; height: 12px; }
.ebody { flex: 1; min-height: 0; display: flex; }
.tree { width: 139px; margin: 0; padding: 0; list-style: none; overflow: hidden; white-space: nowrap; }
.tree li { height: 24px; display: flex; align-items: center; gap: 5px; padding-left: 40px; }
.tree .root { padding-left: 32px; }
.tree .cur { background: #d9d9d9; }
.tree svg { width: 16px; height: 16px; }
.vs { width: 16px; margin-left: 1px; background: #f0f0f0; display: flex; flex-direction: column; align-items: center; padding: 4px 0; }
.vs svg { width: 10px; height: 10px; }
.vs i { width: 15px; height: 119px; background: #cdcdcd; margin: 151px 0 auto; }
.files { flex: 1; min-width: 0; margin-left: 3px; display: flex; flex-direction: column; }
table { border-collapse: collapse; table-layout: fixed; width: 100%; }
.c1 { width: 272px; } .c2 { width: 144px; } .c3 { width: 120px; } .c4 { width: 80px; }
th { position: relative; height: 26px; padding: 0 0 0 6px; text-align: left; font-weight: 400; color: #4c607a; border-right: 1px solid #e5e5e5; }
th:first-child { padding-left: 18px; }
th:last-child { border: 0; }
.dsort { position: absolute; left: 66px; top: -2px; width: 10px; height: 10px; color: #777; }
td { height: 21px; padding: 0; white-space: nowrap; overflow: hidden; }
.f { height: 21px; display: flex; align-items: center; gap: 4px; margin-left: 15px; padding-left: 4px; }
.f svg { width: 16px; height: 16px; }
.g td { height: 33px; }
.g.h td { height: 32px; }
.g div { display: flex; align-items: center; gap: 4px; padding: 0 8px 0 7px; font-size: 15px; line-height: 20px; color: #1e3287; }
.g svg { width: 11px; height: 11px; color: #777; }
.g i { flex: 1; height: 1px; background: #e2e2e2; margin-left: 4px; }
.s { background: linear-gradient(#cce8ff, #cce8ff) 15px 0 / 598px 100% no-repeat; }
.s .f { border: 1px solid #99d1ff; border-right: 0; padding-left: 3px; }
.n { text-align: right; padding-right: 8px; color: #666; }
.hs { margin-top: auto; height: 16px; background: #f0f0f0; display: flex; align-items: center; padding: 0 4px; gap: 3px; }
.hs svg { width: 10px; height: 10px; }
.hs i { flex: 1; height: 15px; background: #cdcdcd; margin-right: 2px; }
.estat { height: 24px; flex: none; display: flex; align-items: center; padding-left: 14px; color: #26466d; }
.estat span + span { margin-left: 22px; }
.estat span + span + span { margin-left: 7px; }
.views { margin-left: auto; display: flex; align-items: center; gap: 3px; padding-right: 8px; }
.views button { padding: 1px; }
.views .on { width: 22px; height: 23px; border: 1px solid #369ac4; background: #c5ecfa; }
.views svg { width: 14px; height: 14px; }
.views .on svg { width: 18px; height: 16px; }

/* watermark */
.mark { position: absolute; left: 1038px; top: 608px; display: flex; align-items: center; gap: 3px; font: 300 35px/64px Roboto, "Liberation Sans", sans-serif; color: #fff; text-shadow: 0 0 3px #bbb; filter: drop-shadow(0 0 1px #bbb); }
.mark svg { width: 60px; height: 64px; }

/* context menu */
.ctx { position: absolute; left: 669px; top: 217px; width: 295px; margin: 0; padding: 4px 2px; list-style: none; background: #eee; border: 1px solid #a0a0a0; color: #000; }
.ctx button { width: 100%; height: 22px; display: flex; align-items: center; padding-left: 8px; gap: 8px; }
.ctx button > i, .ctx svg { width: 16px; height: 16px; }
.ctx .sub { width: 8px; height: 12px; margin-left: auto; margin-right: 8px; }
.ctx .sep { height: 1px; background: #919191; margin: 3px 8px; }
.ctx .bold { font-weight: 700; }

/* taskbar */
.taskbar { height: 40px; flex: none; display: flex; background: linear-gradient(90deg, #001a24, #00131f 60%, #020817); }
.start { width: 48px; display: grid; place-items: center; }
.start svg { width: 16px; height: 16px; }
.tsearch { width: 288px; background: #f2f2f2; border: 1px solid #bbb; display: flex; align-items: center; padding-left: 10px; }
.mag { width: 18px; height: 18px; }
.tsearch input { flex: 1; margin-left: 11px; font-size: 14px; }
.tsearch input::placeholder { color: #333; opacity: 1; }
.palms { width: 72px; height: 38px; margin-right: 4px; }
.task { width: 49px; display: grid; place-items: center; border-bottom: 2px solid transparent; }
.task.view { margin-right: 1px; }
.task svg { width: 26px; height: 26px; }
.task .tv { width: 18px; height: 18px; }
.run { border-image: linear-gradient(90deg, transparent 8%, #76b9ed 8%, #76b9ed 92%, transparent 92%) 2; }
.cur.run { background: #36474f; border-image: none; border-bottom-color: #76b9ed; }
.tray { margin-left: auto; display: flex; align-items: center; gap: 6px; color: #fff; }
.tray svg { width: 18px; height: 18px; }
.tray time { text-align: center; line-height: 18px; width: 56px; margin-left: 1px; }
.tray .note { margin: 0 13px 0 9px; }
.tray i { width: 1px; height: 40px; background: #555d68; margin-right: 4px; }
```
